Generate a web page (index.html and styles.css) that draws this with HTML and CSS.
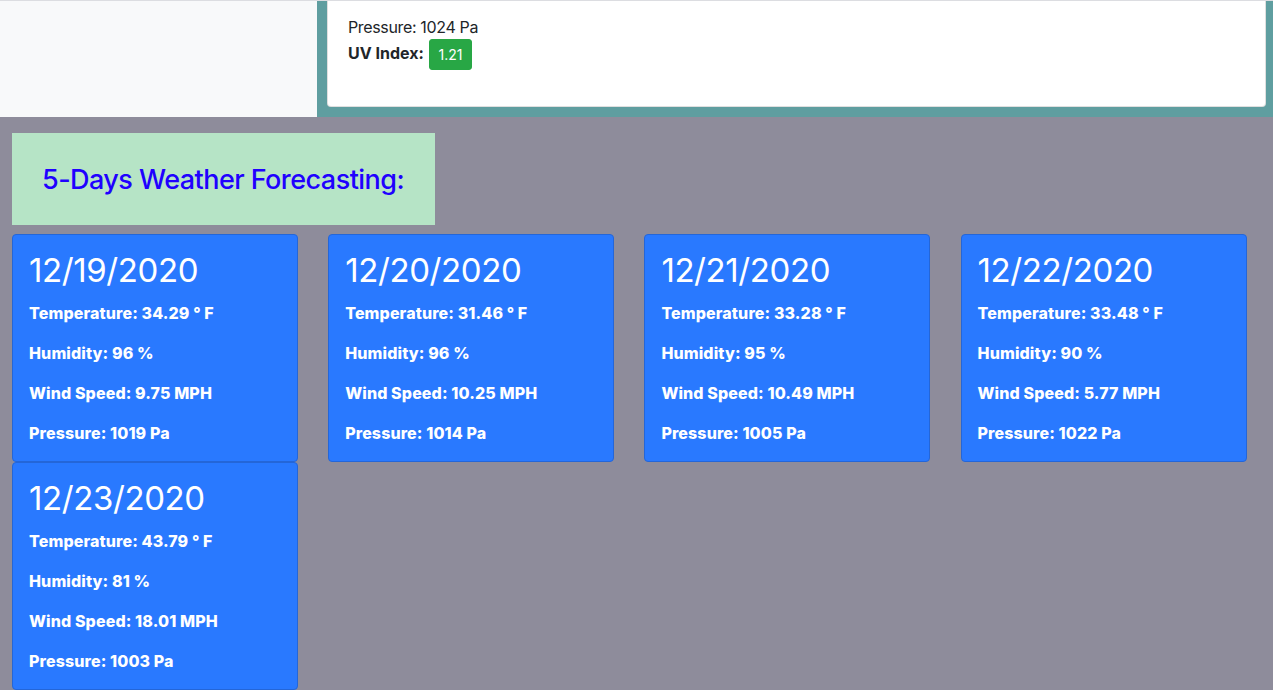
FILE: index.html
```html
<!DOCTYPE html>
<html lang="en">
<head>
<meta charset="utf-8">
<title>Weather Dashboard</title>
<link rel="stylesheet" href="styles.css">
</head>
<body>
<div class="page">
  <div class="top-row">
    <aside class="sidebar"></aside>
    <main class="current">
      <div class="current-card">
        <p class="current-line">Pressure: 1024 Pa</p>
        <p class="current-line"><strong>UV Index:</strong> <span class="uv-badge">1.21</span></p>
      </div>
    </main>
  </div>
  <section class="forecast">
    <h3 class="forecast-title">5-Days Weather Forecasting:</h3>
    <div class="forecast-grid">
      <div class="day-card">
        <h2 class="day-date">12/19/2020</h2>
        <p class="day-line">Temperature: 34.29 ° F</p>
        <p class="day-line">Humidity: 96 %</p>
        <p class="day-line">Wind Speed: 9.75 MPH</p>
        <p class="day-line">Pressure: 1019 Pa</p>
      </div>
      <div class="day-card">
        <h2 class="day-date">12/20/2020</h2>
        <p class="day-line">Temperature: 31.46 ° F</p>
        <p class="day-line">Humidity: 96 %</p>
        <p class="day-line">Wind Speed: 10.25 MPH</p>
        <p class="day-line">Pressure: 1014 Pa</p>
      </div>
      <div class="day-card">
        <h2 class="day-date">12/21/2020</h2>
        <p class="day-line">Temperature: 33.28 ° F</p>
        <p class="day-line">Humidity: 95 %</p>
        <p class="day-line">Wind Speed: 10.49 MPH</p>
        <p class="day-line">Pressure: 1005 Pa</p>
      </div>
      <div class="day-card">
        <h2 class="day-date">12/22/2020</h2>
        <p class="day-line">Temperature: 33.48 ° F</p>
        <p class="day-line">Humidity: 90 %</p>
        <p class="day-line">Wind Speed: 5.77 MPH</p>
        <p class="day-line">Pressure: 1022 Pa</p>
      </div>
      <div class="day-card">
        <h2 class="day-date">12/23/2020</h2>
        <p class="day-line">Temperature: 43.79 ° F</p>
        <p class="day-line">Humidity: 81 %</p>
        <p class="day-line">Wind Speed: 18.01 MPH</p>
        <p class="day-line">Pressure: 1003 Pa</p>
      </div>
    </div>
  </section>
</div>
</body>
</html>
```

FILE: styles.css
```css
html, body {
  margin: 0;
  padding: 0;
}

body {
  background: #8e8c9b;
  font-family: Inter, "Noto Sans", "Liberation Sans", sans-serif;
  font-size: 16px;
  line-height: 24px;
  color: #212529;
  overflow: hidden;
}

.page {
  border-top: 1px solid #dcdde1;
  min-height: 689px;
}

.top-row {
  display: flex;
}

.sidebar {
  width: 317px;
  background: #f8f9fa;
}

.current {
  flex: 1;
  background: #5f9ea0;
  padding: 0 7px 10px 10px;
}

.current-card {
  background: #ffffff;
  border: 1px solid rgba(0, 0, 0, 0.125);
  border-top: none;
  border-radius: 0 0 4px 4px;
  padding: 14px 20px 36px 20px;
}

.current-line {
  margin: 0;
  letter-spacing: -0.35px;
}

.current-line strong {
  font-weight: 700;
  letter-spacing: 0;
}

.uv-badge {
  display: inline-block;
  vertical-align: middle;
  background: #28a745;
  color: #ffffff;
  font-size: 14px;
  line-height: 21px;
  padding: 4px 8.5px;
  border: 1px solid #28a745;
  border-radius: 3px;
  letter-spacing: 0;
  margin-left: 1px;
}

.forecast {
  padding: 16px 12px 0 12px;
}

.forecast-title {
  display: inline-block;
  margin: 0 0 9px 0;
  width: 423px;
  height: 92px;
  box-sizing: border-box;
  padding: 0 0 0 30px;
  background: #b6e4c6;
  color: #2000ff;
  font-size: 27px;
  line-height: 94px;
  font-weight: 500;
  letter-spacing: -0.55px;
}

.forecast-grid {
  display: grid;
  grid-template-columns: repeat(4, 286px);
  column-gap: 30.2px;
  row-gap: 0;
}

.day-card {
  background: #2979ff;
  border: 1px solid #2466d8;
  border-radius: 4px;
  padding: 15px 16px 0 16px;
  color: #ffffff;
}

.day-date {
  margin: 0 0 11px 0;
  font-size: 33px;
  line-height: 40px;
  font-weight: 400;
  letter-spacing: -0.4px;
}

.day-line {
  margin: 0 0 16px 0;
  font-weight: 800;
  font-size: 16px;
  line-height: 24px;
  letter-spacing: 0.12px;
}
```
